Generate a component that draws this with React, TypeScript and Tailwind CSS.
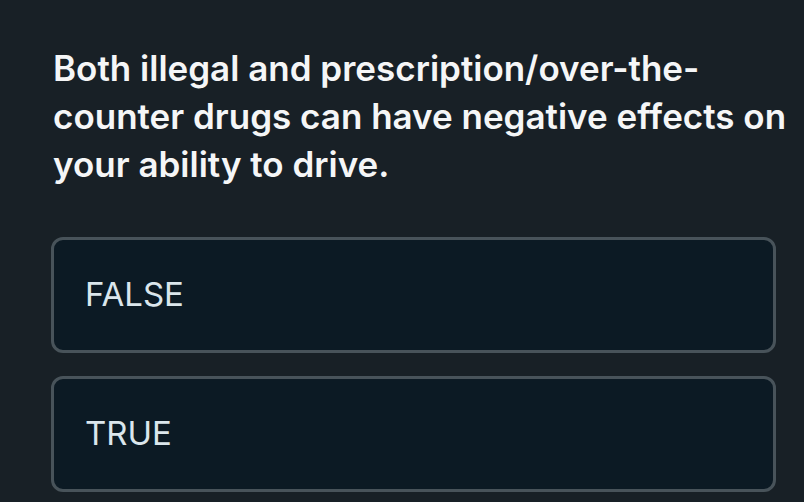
import { useState } from "react";

const choices = ["FALSE", "TRUE"];

export default function App() {
	const [picked, setPicked] = useState<string | null>(null);

	return (
		<div className="w-[804px] h-[502px] overflow-hidden bg-[#182026] pl-[51px] pr-[28px] pt-[44px]" style={{ fontFamily: "Inter, 'Noto Sans', sans-serif" }}>
			<p className="text-[35px] leading-[48px] font-semibold text-[#f5f6f7] pl-[2px] -mr-[20px]">
				Both illegal and prescription/over-the-counter drugs can have negative effects on your ability to drive.
			</p>
			<div className="mt-[49px] flex flex-col gap-[23px]">
				{choices.map((c) => (
					<button
						key={c}
						onClick={() => setPicked(c)}
						className={`h-[116px] w-full rounded-[12px] border-[3px] border-[#48535a] bg-[#0c1a24] text-left pl-[31px] text-[33px] text-[#dbe6ec] ${picked === c ? "border-[#6b7a83]" : ""}`}
					>
						{c}
					</button>
				))}
			</div>
		</div>
	);
}
